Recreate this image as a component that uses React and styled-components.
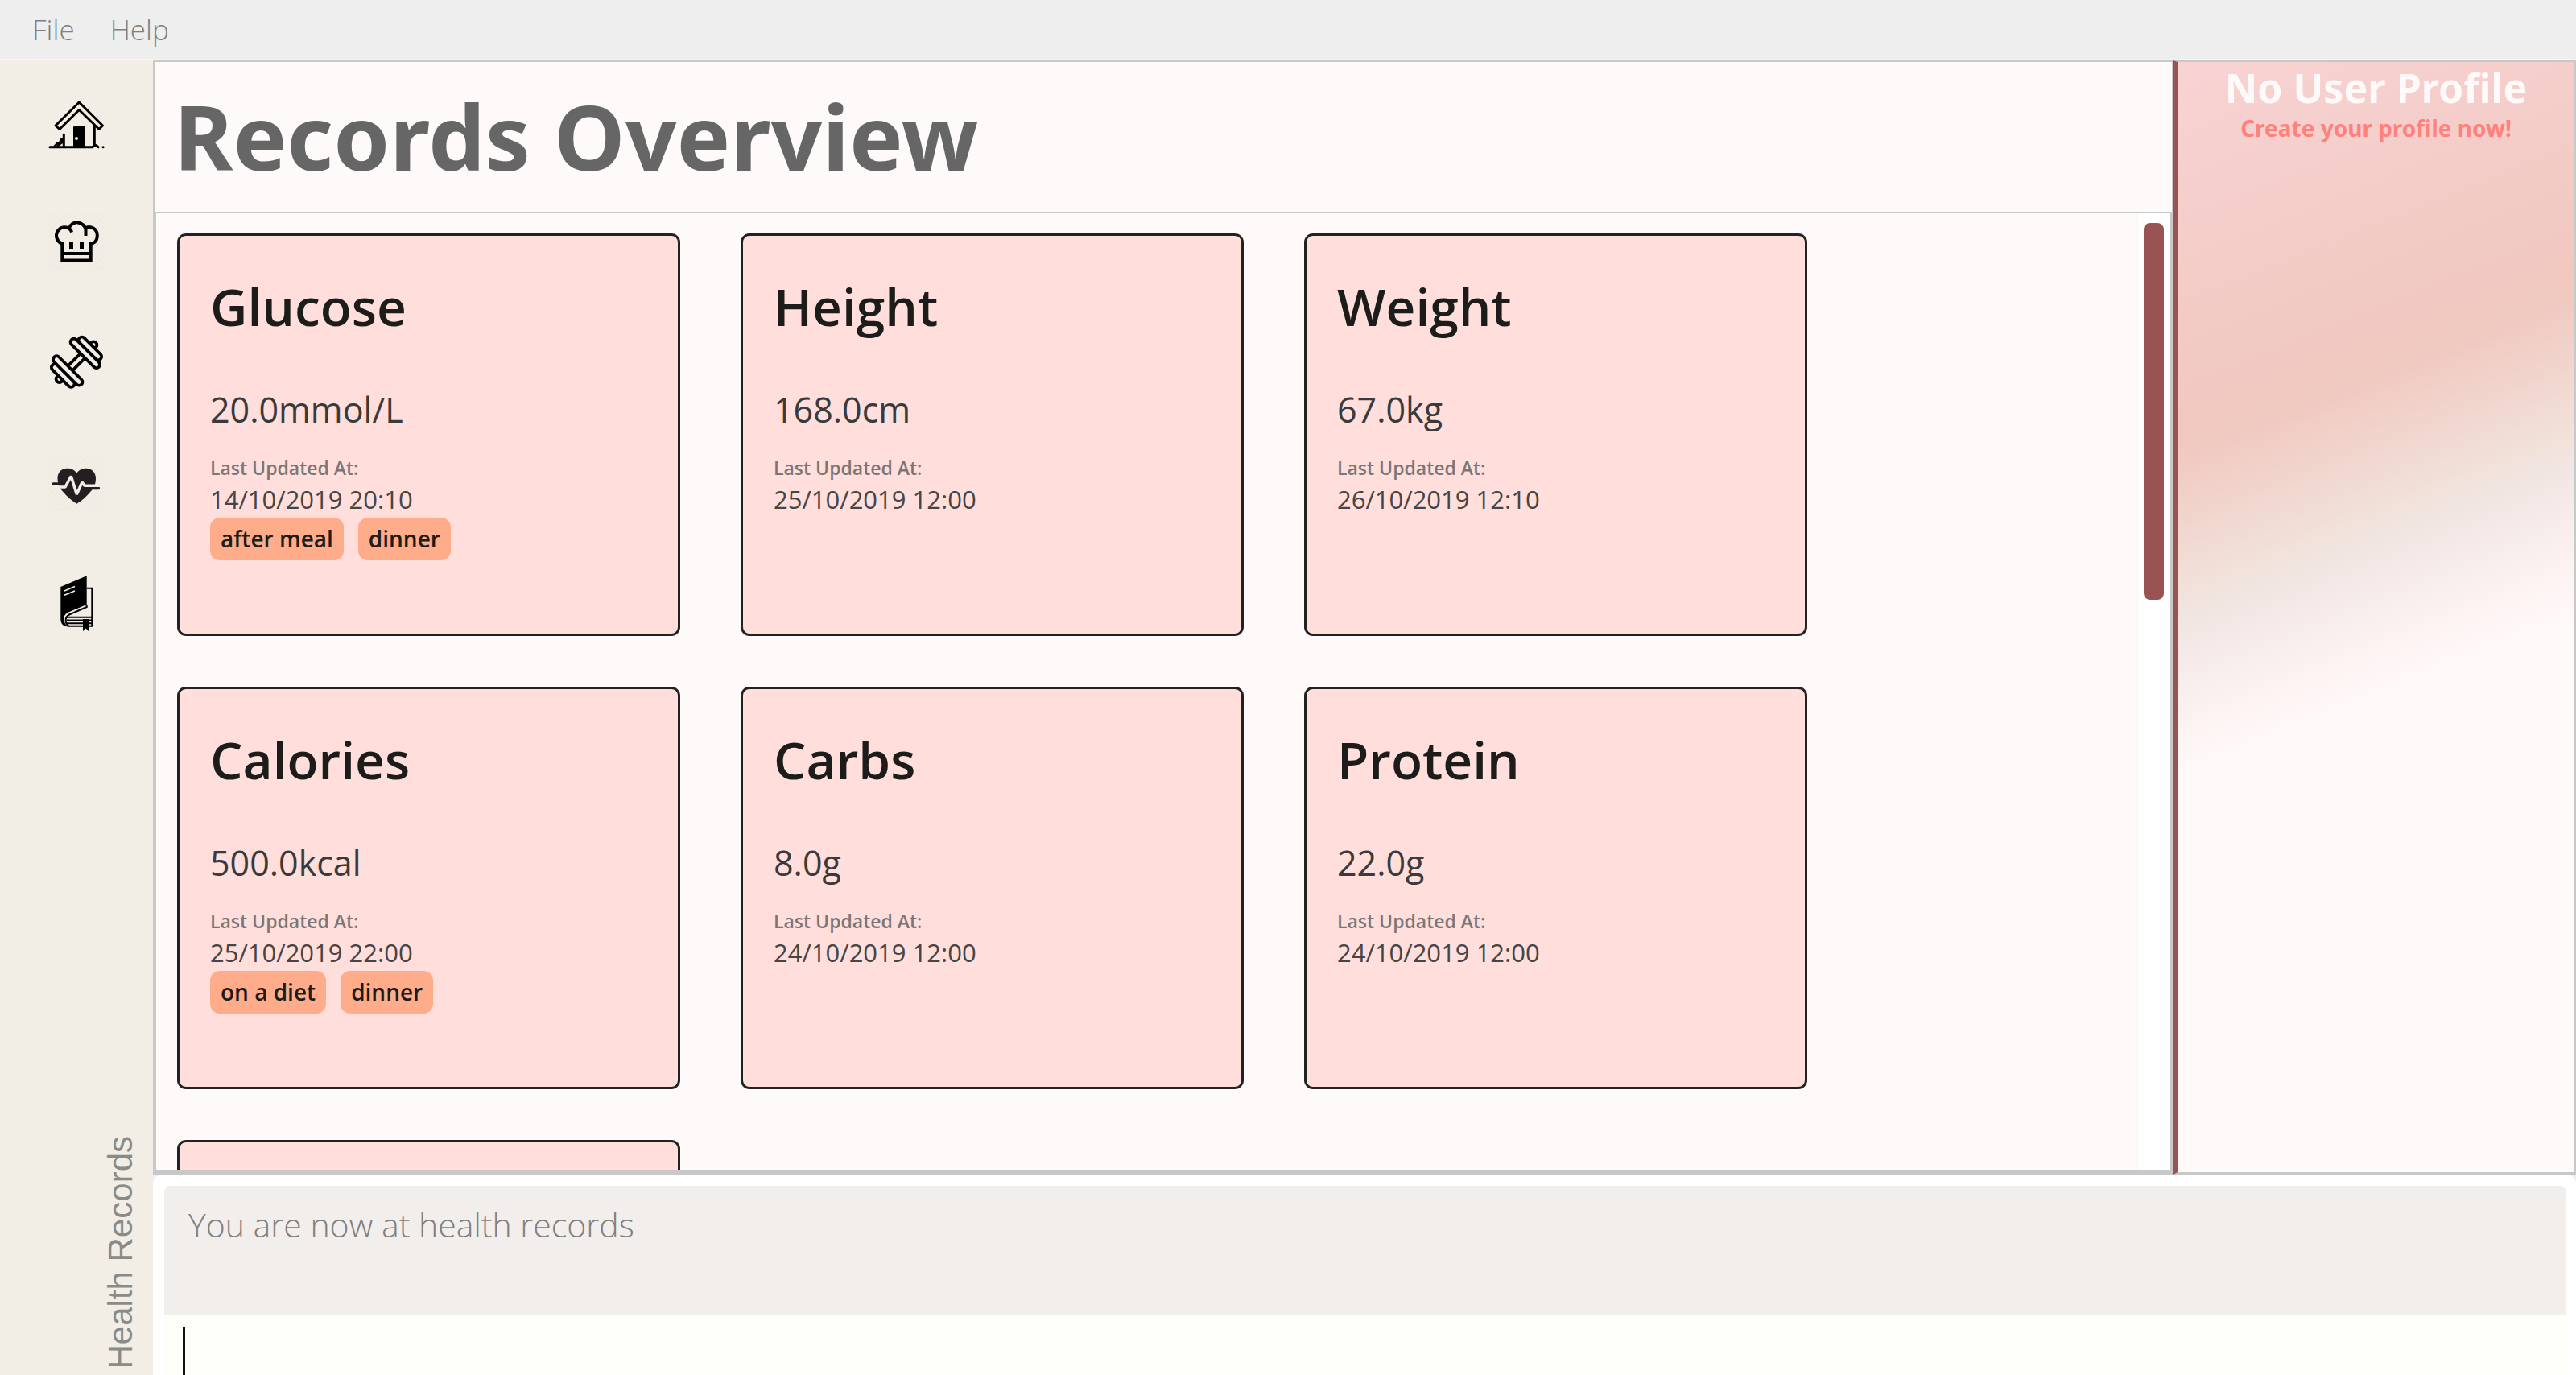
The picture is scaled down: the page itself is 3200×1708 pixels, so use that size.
import React from "react";
import styled, { createGlobalStyle, css } from "styled-components";

const sans = `"Open Sans", "Noto Sans", "Liberation Sans", sans-serif`;
const heading = `"Noto Sans", "Open Sans", "Liberation Sans", sans-serif`;

const GlobalStyle = createGlobalStyle`
  *, *::before, *::after { box-sizing: border-box; }
  body { margin: 0; background: #f2ede5; font-family: ${sans}; }
  h1, h2, p, ul { margin: 0; padding: 0; }
`;

const Window = styled.div`
  display: flex;
  flex-direction: column;
  height: 100vh;
  overflow: hidden;
`;

const MenuBar = styled.nav`
  display: flex;
  gap: 44px;
  padding: 12px 40px;
  height: 75px;
  flex: none;
  background: #eeeeee;
  border-bottom: 2px solid #f4f4f4;
`;

const MenuItem = styled.button`
  padding: 0;
  border: 0;
  background: none;
  font: 300 35px/50px ${sans};
  color: #808080;
`;

const Body = styled.div`
  display: flex;
  flex: 1;
  min-height: 0;
`;

const Sidebar = styled.aside`
  display: flex;
  flex-direction: column;
  justify-content: space-between;
  width: 190px;
  flex: none;
  padding: 40px 0 8px;
  background: #f2ede5;
`;

const IconList = styled.nav`
  display: flex;
  flex-direction: column;
  align-items: center;
  gap: 80px;
`;

const IconButton = styled.button`
  width: 70px;
  height: 70px;
  padding: 0;
  border: 0;
  background: none;
  ${(p) =>
    p.$hatched &&
    css`
      background: repeating-linear-gradient(135deg, #efebe3 0 2px, #f2eee6 2px 5px);
    `}
  svg { display: block; width: 70px; height: 70px; overflow: visible; }
`;

const PageName = styled.p`
  align-self: flex-end;
  margin-right: 16px;
  writing-mode: vertical-rl;
  transform: rotate(180deg);
  font: 400 42px/48px "Liberation Sans", Arial, sans-serif;
  color: #8a8a88;
`;

const Workspace = styled.div`
  display: flex;
  flex-direction: column;
  flex: 1;
  min-width: 0;
  background: #f0f0f2;
`;

const Upper = styled.div`
  display: flex;
  flex: 1;
  min-height: 0;
`;

const Main = styled.main`
  display: flex;
  flex-direction: column;
  flex: 1;
  min-width: 0;
  border: 2px solid #c8c8c8;
  border-bottom-width: 3px;
  background: #fffafa;
`;

const PageTitle = styled.h1`
  flex: none;
  height: 186px;
  padding: 16px 24px;
  font: 700 112px/152px ${heading};
  color: #666666;
`;

const ScrollPane = styled.section`
  display: flex;
  flex: 1;
  min-height: 0;
  border: 2px solid #c8c8c8;
  border-bottom-width: 3px;
`;

const Cards = styled.div`
  display: grid;
  flex: 1;
  grid-template-columns: repeat(auto-fill, 625px);
  grid-auto-rows: 500px;
  gap: 63px 75px;
  padding: 25px 26px;
  min-height: 0;
  overflow: hidden;
`;

const Track = styled.div`
  width: 41px;
  padding: 12px 7px;
  background: #ffffff;
  border-left: 1px solid #f8f6f6;
`;

const Thumb = styled.div`
  width: 25px;
  height: 468px;
  border-radius: 8px;
  background: #9a5353;
`;

const Card = styled.article`
  padding: 42px 38px;
  border: 3px solid #222222;
  border-radius: 11px;
  background: #ffdedb;
`;

const CardTitle = styled.h2`
  font: 600 64px/92px ${sans};
  color: #1c1c1a;
`;

const Value = styled.p`
  margin: 52px 0 26px;
  font: 400 43px/60px ${sans};
  color: #3a3a3a;
`;

const Label = styled.p`
  font: 600 23px/32px ${sans};
  color: #7a7676;
`;

const Stamp = styled.p`
  font: 400 31px/46px ${sans};
  color: #454545;
`;

const Tags = styled.ul`
  display: flex;
  gap: 18px;
  list-style: none;
`;

const Tag = styled.li`
  padding: 6px 13px;
  border-radius: 12px;
  background: #feac89;
  font: 600 28px/41px ${sans};
  color: #1c1c1a;
`;

const Profile = styled.aside`
  width: 500px;
  flex: none;
  border: 2px solid #c8c8c8;
  border-left: 5px solid #9a5353;
  border-bottom-width: 3px;
  text-align: center;
  background: linear-gradient(
    158deg,
    #f8d3d3 0%,
    #f0c8c0 29%,
    #f0c9c1 31%,
    #f1e2da 42%,
    #f1e5e2 44%,
    #fdf4f3 53%,
    #fffafa 57%
  );
`;

const ProfileTitle = styled.h2`
  font: 700 50px/64px ${heading};
  color: #fffafa;
`;

const ProfileHint = styled.p`
  font: 700 28px/36px ${heading};
  color: #ff817b;
`;

const Console = styled.footer`
  flex: none;
  padding: 14px 12px 0 14px;
  border-radius: 12px 12px 0 0;
  background: #ffffff;
`;

const Message = styled.output`
  display: block;
  height: 160px;
  padding: 18px 30px;
  border-radius: 8px 8px 0 0;
  background: #f1eeeb;
  font: 300 41px/60px ${sans};
  color: #808080;
`;

const CommandLine = styled.label`
  display: flex;
  height: 75px;
  padding: 15px 23px 0;
  background: #fffffa;
`;

const Caret = styled.span`
  width: 3px;
  background: #141414;
`;

const CommandInput = styled.input`
  flex: 1;
  border: 0;
  outline: 0;
  background: none;
  font: 300 41px/60px ${sans};
`;

const HomeIcon = () => (
  <svg viewBox="0 0 70 70" fill="none" stroke="#000" strokeWidth="3" strokeLinejoin="round" strokeLinecap="round">
    <path d="M38.3 12 L9 41 L14 45.5 L38.3 21.5 L63 45.5 L67.5 41 Z" />
    <path d="M57.3 41 V66" />
    <rect x="31" y="42" width="15" height="25" rx="1" fill="#000" stroke="none" />
    <circle cx="35" cy="57" r="2" fill="#f2ede5" stroke="none" />
    <path d="M2 67.7 H55 L57.5 65 L60 66 L62 67.7 M68 67.7 h.1" />
    <path d="M19.3 52 V67 M8 66.5 L11.5 63 H14 L16 58.5 L18.5 57.5 M12 65.5 L18 61" />
  </svg>
);

const ChefIcon = () => (
  <svg viewBox="0 0 70 70" fill="none" stroke="#000" strokeWidth="4">
    <path d="M17.3 36 V58.5 H52.7 V36 M17.3 50 H52.7" />
    <path d="M19 38 A10.4 10.4 0 0 1 20 17.3 C25 17.3 28 19.5 29 23.5" />
    <path d="M25.5 19 A10.8 10.8 0 0 1 46.5 20.5 V28" />
    <path d="M45 18.5 C53 14.5 60.8 19.5 60.8 27.5 C60.8 34 57 38 51 38" />
    <path d="M28.5 35 v9 M41.5 35 v9" strokeWidth="5" />
  </svg>
);

const DumbbellEnd = () => (
  <>
    <circle cx="30" cy="0" r="4.2" />
    <rect x="19.5" y="-18.5" width="8.5" height="37" rx="4.2" />
    <rect x="11" y="-24" width="8.5" height="48" rx="4.2" />
  </>
);

const DumbbellIcon = () => (
  <svg viewBox="0 0 70 70" fill="#f2ede5" stroke="#000" strokeWidth="3.8">
    <g transform="translate(35 34.7) rotate(-45)">
      <rect x="-12" y="-4" width="24" height="8" />
      <DumbbellEnd />
      <g transform="rotate(180)"><DumbbellEnd /></g>
    </g>
  </svg>
);

const HeartIcon = () => (
  <svg viewBox="0 0 70 70" fill="none" strokeLinecap="round">
    <path
      fill="#231f20"
      d="M35.3 22.5 C32 18 28 16.7 23.5 16.7 C16 16.7 11.5 22 11.5 29 C11.5 36 14 41.5 17.5 45 C23 51.5 29 57 35.3 60.7 C42 57 48 51 53.5 44.5 C57.5 40 59 35 59 29 C59 22 54 16.7 46.7 16.7 C42 16.7 38 18.5 35.3 22.5 Z"
    />
    <path d="M6 36 H19 M50 41.5 H62.5" stroke="#231f20" strokeWidth="3.4" />
    <path d="M9 40 H21 L28.3 26.5 L35.3 49 L42 34 L45 38.3 H64" stroke="#f2ede5" strokeWidth="3.6" strokeLinecap="butt" strokeLinejoin="bevel" />
  </svg>
);

const BookIcon = () => (
  <svg viewBox="0 0 70 70" fill="none" stroke="#000" strokeWidth="2">
    <path d="M15.3 14 L47.7 0.3 V36 L25 45.5 C20 48 19 51 19.5 55 C20 59 22 62 25 63.5 C19 63.5 15.3 60 15.3 54 Z" fill="#000" stroke="none" />
    <path d="M47.7 37 V39 L26 48.5 C20 51.5 20.5 60 25.5 62.7 H54.3 V15.7 H48" />
    <path d="M23 51.7 H54 M22.5 55.5 H54 M23 59.3 H54" />
    <path d="M20 19 L33 13.5 M20 24.3 L33 19" stroke="#f2ede5" strokeWidth="1.6" />
    <path d="M43 54 H50 V69 L46.5 65.5 L43 69 Z" fill="#000" stroke="none" />
  </svg>
);

const sections = [
  { name: "Home", Icon: HomeIcon },
  { name: "Recipes", Icon: ChefIcon, hatched: true },
  { name: "Exercises", Icon: DumbbellIcon },
  { name: "Health records", Icon: HeartIcon, hatched: true },
  { name: "Diary", Icon: BookIcon },
];

const records = [
  { title: "Glucose", value: "20.0mmol/L", updated: "14/10/2019 20:10", tags: ["after meal", "dinner"] },
  { title: "Height", value: "168.0cm", updated: "25/10/2019 12:00" },
  { title: "Weight", value: "67.0kg", updated: "26/10/2019 12:10" },
  { title: "Calories", value: "500.0kcal", updated: "25/10/2019 22:00", tags: ["on a diet", "dinner"] },
  { title: "Carbs", value: "8.0g", updated: "24/10/2019 12:00" },
  { title: "Protein", value: "22.0g", updated: "24/10/2019 12:00" },
];

const RecordCard = ({ title, value, updated, tags = [] }) => (
  <Card>
    <CardTitle>{title}</CardTitle>
    <Value>{value}</Value>
    <Label>Last Updated At:</Label>
    <Stamp>{updated}</Stamp>
    {tags.length > 0 && (
      <Tags>
        {tags.map((tag) => (
          <Tag key={tag}>{tag}</Tag>
        ))}
      </Tags>
    )}
  </Card>
);

export default function App() {
  return (
    <Window>
      <GlobalStyle />
      <MenuBar>
        <MenuItem type="button">File</MenuItem>
        <MenuItem type="button">Help</MenuItem>
      </MenuBar>
      <Body>
        <Sidebar>
          <IconList>
            {sections.map(({ name, Icon, hatched }) => (
              <IconButton key={name} type="button" aria-label={name} $hatched={hatched}>
                <Icon />
              </IconButton>
            ))}
          </IconList>
          <PageName>Health Records</PageName>
        </Sidebar>
        <Workspace>
          <Upper>
            <Main>
              <PageTitle>Records Overview</PageTitle>
              <ScrollPane>
                <Cards>
                  {records.map((record) => (
                    <RecordCard key={record.title} {...record} />
                  ))}
                  <Card />
                </Cards>
                <Track>
                  <Thumb />
                </Track>
              </ScrollPane>
            </Main>
            <Profile>
              <ProfileTitle>No User Profile</ProfileTitle>
              <ProfileHint>Create your profile now!</ProfileHint>
            </Profile>
          </Upper>
          <Console>
            <Message>You are now at health records</Message>
            <CommandLine>
              <Caret />
              <CommandInput type="text" aria-label="Command" />
            </CommandLine>
          </Console>
        </Workspace>
      </Body>
    </Window>
  );
}
